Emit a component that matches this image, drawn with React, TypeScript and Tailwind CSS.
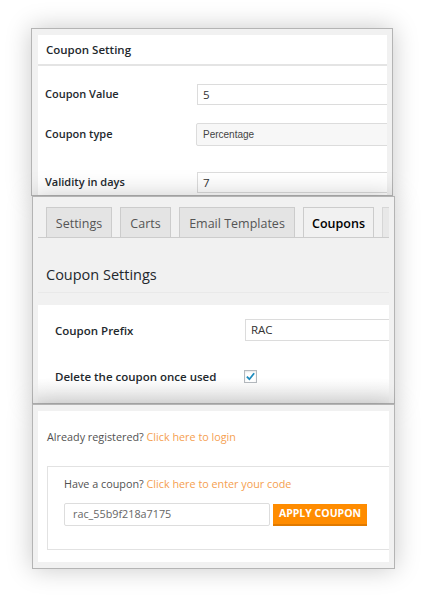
const font = { fontFamily: '"Open Sans", "Liberation Sans", sans-serif' };

const Row = ({ label, children, h }: { label: string; children: React.ReactNode; h: string }) => (
    <div className={`flex items-center ${h}`}>
        <div className="w-[159px] shrink-0 pl-[7px] text-[11px] font-semibold text-[#23282d]">{label}</div>
        <div className="flex-1">{children}</div>
    </div>
);

const TABS = [
    { name: 'Settings', w: 'w-[66px]' },
    { name: 'Carts', w: 'w-[51px]' },
    { name: 'Email Templates', w: 'w-[116px]' },
    { name: 'Coupons', w: 'w-[71px]' },
];

export default function App() {
    return (
        <div className="min-h-[601px] bg-white pt-[28px]" style={font}>
            {/* panel 1: coupon setting */}
            <div className="relative z-0 ml-[31px] h-[168px] w-[362px] overflow-hidden border border-[#b4b4b4] bg-[#f1f1f1] pl-[6px] pr-[5px] pt-[6px] shadow-[0_0_24px_rgba(0,0,0,0.22)]">
                <div className="flex h-[29px] items-center bg-white pl-[8px] text-[11.5px] font-semibold text-[#23282d]">
                    Coupon Setting
                </div>
                <div className="h-[2px] bg-[#e4e4e4]" />
                <div className="h-[200px] overflow-hidden bg-white pt-[18px]">
                    <Row label="Coupon Value" h="h-[21px]">
                        <div className="-mr-2 flex h-[21px] items-center border border-[#dcdcdc] pl-[5px] text-[11.5px] text-[#333]">5</div>
                    </Row>
                    <div className="h-[18px]" />
                    <Row label="Coupon type" h="h-[23px]">
                        <div className="-ml-px -mr-2 flex h-[23px] items-center rounded-l-[2px] border border-[#dcdcdc] bg-[#f7f7f7] pl-[6px] text-[10px] text-[#444]" style={{ fontFamily: '"Liberation Sans", Arial, sans-serif' }}>
                            Percentage
                        </div>
                    </Row>
                    <div className="h-[26px]" />
                    <Row label="Validity in days" h="h-[21px]">
                        <div className="-mr-2 flex h-[21px] items-center border border-[#dcdcdc] pl-[5px] text-[11.5px] text-[#333]">7</div>
                    </Row>
                </div>
            </div>

            {/* panel 2: tabs */}
            <div className="relative z-10 ml-[32px] h-[208px] w-[363px] overflow-hidden border border-[#b4b4b4] bg-[#f1f1f1] px-[5px] pt-[10px] shadow-[0_0_24px_rgba(0,0,0,0.22)]">
                <div className="flex h-[31px] items-end gap-[8px] overflow-hidden border-b border-[#cccccc] pl-[8px]">
                    {TABS.map(t => (
                        <div
                            key={t.name}
                            className={
                                t.name === 'Coupons'
                                    ? `-mb-px flex h-[31px] shrink-0 items-center justify-center whitespace-nowrap border border-b-0 border-[#cccccc] bg-[#f1f1f1] pt-[3px] text-[12.5px] font-semibold text-black ${t.w}`
                                    : `flex h-[30px] shrink-0 items-center justify-center whitespace-nowrap border border-b-0 border-[#cccccc] bg-[#e4e4e4] pt-[3px] text-[12.5px] text-[#555] ${t.w}`
                            }
                        >
                            {t.name}
                        </div>
                    ))}
                    <div className="h-[30px] w-[10px] shrink-0 border border-b-0 border-[#d6d6d6] bg-[#e8e8e8]" />
                </div>
                <div className="h-[55px] border-b border-[#e9e9e9] pl-[8px] pt-[27px] text-[14.5px] leading-[20px] text-[#23282d]">
                    Coupon Settings
                </div>
                <div className="mt-[12px] h-[98px] overflow-hidden bg-gradient-to-b from-white from-75% to-[#ececec]">
                    <div className="flex h-[36px] items-end">
                        <div className="flex h-[22px] w-[207px] shrink-0 items-center pl-[17px] pt-[2px] text-[11.5px] font-semibold text-[#23282d]">Coupon Prefix</div>
                        <div className="-mr-2 flex h-[22px] flex-1 items-center border border-[#dcdcdc] bg-white pl-[5px] text-[11.5px] text-[#333]">RAC</div>
                    </div>
                    <div className="flex h-[46px] items-end">
                        <div className="flex h-[20px] w-[206px] shrink-0 items-center pl-[17px] text-[11.5px] font-semibold text-[#23282d]">Delete the coupon once used</div>
                        <div className="mb-[4px] flex h-[13px] w-[13px] items-center justify-center border border-[#b4b9be] bg-white shadow-[inset_0_1px_2px_rgba(0,0,0,0.1)]">
                            <svg viewBox="0 0 12 12" className="h-[11px] w-[11px]">
                                <path d="M2 6.2 L4.8 9 L10 2.5" fill="none" stroke="#1e8cbe" strokeWidth="2" />
                            </svg>
                        </div>
                    </div>
                </div>
            </div>

            {/* panel 3: checkout */}
            <div className="relative z-20 ml-[32px] h-[165px] w-[363px] overflow-hidden border border-[#b4b4b4] bg-[#f1f1f1] px-[5px] py-[6px] shadow-[0_0_24px_rgba(0,0,0,0.22)]">
                <div className="h-[151px] overflow-hidden bg-white pt-[17px]">
                    <p className="pl-[9px] text-[10.8px] leading-[18px] text-[#515151]">
                        Already registered? <span className="text-[#f5a04f]">Click here to login</span>
                    </p>
                    <div className="-mr-4 ml-[9px] mt-[20px] h-[84px] border border-[#e2e2e2] pl-[16px] pt-[8px]">
                        <p className="text-[10.8px] leading-[18px] text-[#515151]">
                            Have a coupon? <span className="text-[#f5a04f]">Click here to enter your code</span>
                        </p>
                        <div className="mt-[10px] flex items-start gap-[3px]">
                            <div className="flex h-[23px] w-[206px] items-center rounded-[2px] border border-[#dddddd] pl-[8px] text-[10.8px] text-[#666]">
                                rac_55b9f218a7175
                            </div>
                            <div className="mt-px flex h-[22px] w-[94px] items-center justify-center whitespace-nowrap border-b-2 border-[#e07a00] bg-[#ff8c00] text-[10.5px] font-bold text-white">
                                APPLY COUPON
                            </div>
                        </div>
                    </div>
                </div>
            </div>
        </div>
    );
}
